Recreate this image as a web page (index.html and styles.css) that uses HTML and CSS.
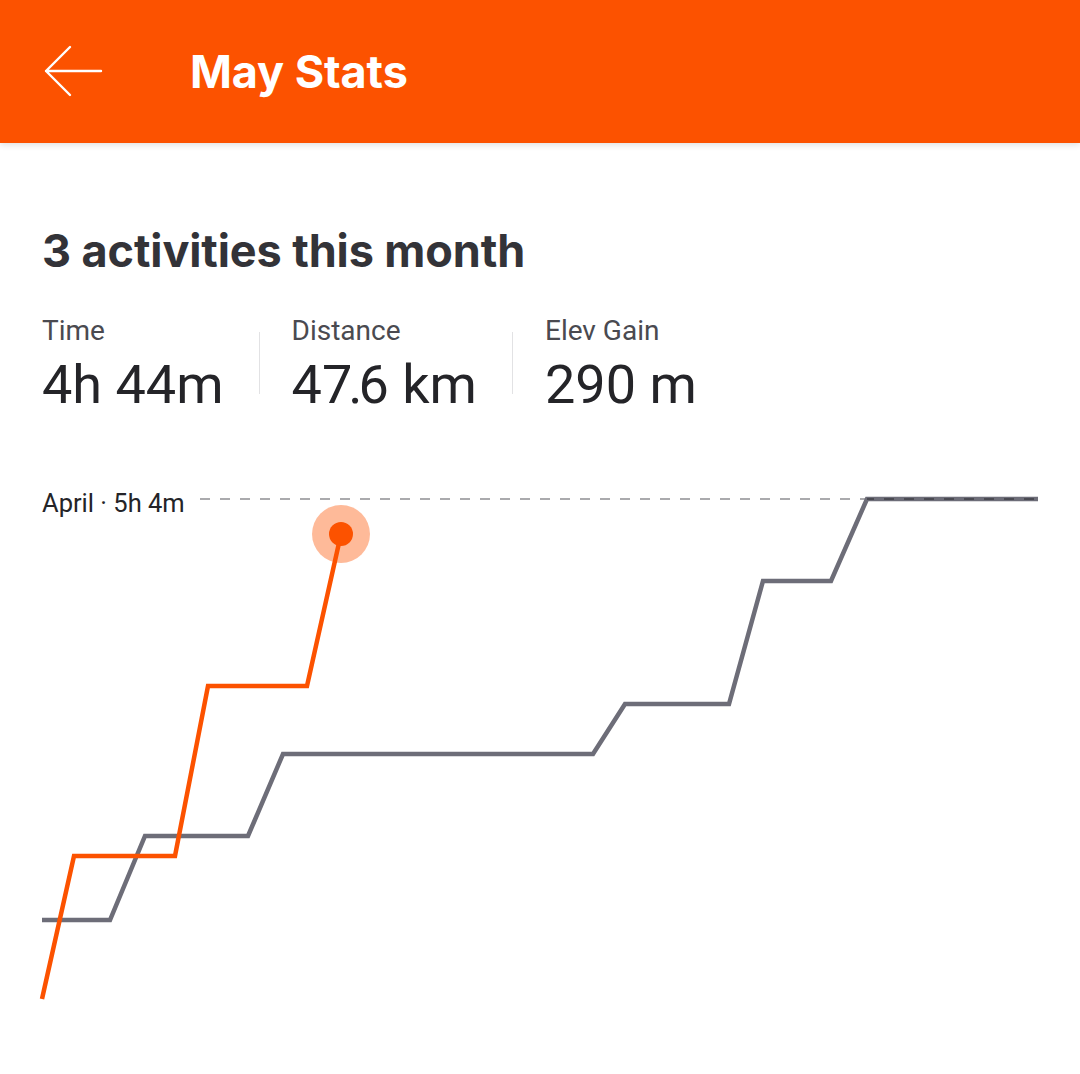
FILE: index.html
```html
<!DOCTYPE html>
<html>
<head>
    <meta charset="utf-8" />
    <meta name="viewport" content="width=device-width, initial-scale=1.0">
    <title>May Stats</title>
    <link rel="stylesheet" href="styles.css">
</head>
<body>

    <header class="topbar">
        <button class="back" aria-label="Back">
            <svg width="60" height="52" viewBox="0 0 60 52">
                <path d="M27 2 L3 26 L27 50 M3 26 L58 26" fill="none" stroke="#fff" stroke-width="2.4" stroke-linecap="round" stroke-linejoin="round"/>
            </svg>
        </button>
        <h1 class="title">May Stats</h1>
    </header>

    <main class="content">
        <h2 class="summary">3 activities this month</h2>

        <div class="stats">
            <div class="stat">
                <span class="stat-label">Time</span>
                <span class="stat-value">4h 44m</span>
            </div>
            <div class="divider"></div>
            <div class="stat">
                <span class="stat-label">Distance</span>
                <span class="stat-value">4<span class="tight">7.</span>6 km</span>
            </div>
            <div class="divider"></div>
            <div class="stat">
                <span class="stat-label">Elev Gain</span>
                <span class="stat-value">290 m</span>
            </div>
        </div>
    </main>

    <!-- cumulative time chart, coordinates in page pixels -->
    <svg class="chart" width="1080" height="614" viewBox="0 460 1080 614">
        <text class="chart-label" x="42" y="512">April · 5h 4m</text>
        <line x1="200" y1="499" x2="1038" y2="499" stroke="#8e8e93" stroke-width="1.6" stroke-dasharray="10 10"/>

        <polyline fill="none" stroke="#6d6d78" stroke-width="4.5" stroke-linejoin="miter"
            points="42,920 110,920 145,836 248,836 283,754 593,754 625,704 729,704 763,581 831,581 867,499 1038,499"/>
        <line x1="867" y1="499" x2="1038" y2="499" stroke="#4a4a52" stroke-width="2" stroke-dasharray="10 10" stroke-dashoffset="3"/>

        <polyline fill="none" stroke="#fc5200" stroke-width="4.5" stroke-linejoin="miter"
            points="42,999 74,856 175,856 208,686 307,686 341,534"/>
        <circle cx="341" cy="534" r="29" fill="#fc5200" fill-opacity="0.4"/>
        <circle cx="341" cy="534" r="12" fill="#fc5200"/>
    </svg>

</body>
</html>
```

FILE: styles.css
```css
html, body {
    --orange: #fc5200;
    --ink:    #242428;
    --text:   #333338;
    --muted:  #4a4a50;
    --line:   #e2e2e4;

    margin: 0;
    padding: 0;
    background: #fff;
    font-family: Inter, "Noto Sans", sans-serif;
    color: var(--ink);
}

.topbar {
    height: 143px;
    background: var(--orange);
    display: flex;
    align-items: center;
    box-shadow: 0 2px 6px rgba(0, 0, 0, 0.12);
    position: relative;
}

.back {
    all: unset;
    display: flex;
    margin-left: 43px;
    margin-top: -2px;
}

.title {
    margin: 0 0 0 87px;
    color: #fff;
    font-size: 45px;
    font-weight: 700;
    letter-spacing: -0.1px;
}

.content {
    height: 317px;
    padding: 0 42px;
    box-sizing: border-box;
    overflow: hidden;
}

.summary {
    margin: 80px 0 0 0;
    font-size: 45px;
    font-weight: 700;
    color: var(--text);
    line-height: 56px;
    letter-spacing: -0.1px;
}

.stats {
    display: flex;
    align-items: flex-start;
    margin-top: 35px;
}

.stat {
    display: flex;
    flex-direction: column;
    font-family: Roboto, "Noto Sans", sans-serif;
}

.stat-label {
    font-size: 28px;
    line-height: 34px;
    color: var(--muted);
}

.stat-value {
    font-size: 54px;
    line-height: 60px;
    color: var(--ink);
    margin-top: 7px;
}

.stat-value .tight {
    letter-spacing: -4px;
}

.divider {
    width: 1px;
    height: 62px;
    background: var(--line);
    margin: 18px 32px 0 35px;
}

.chart {
    display: block;
}

.chart-label {
    font-family: Roboto, "Noto Sans", sans-serif;
    font-size: 25.5px;
    fill: var(--ink);
}
```
